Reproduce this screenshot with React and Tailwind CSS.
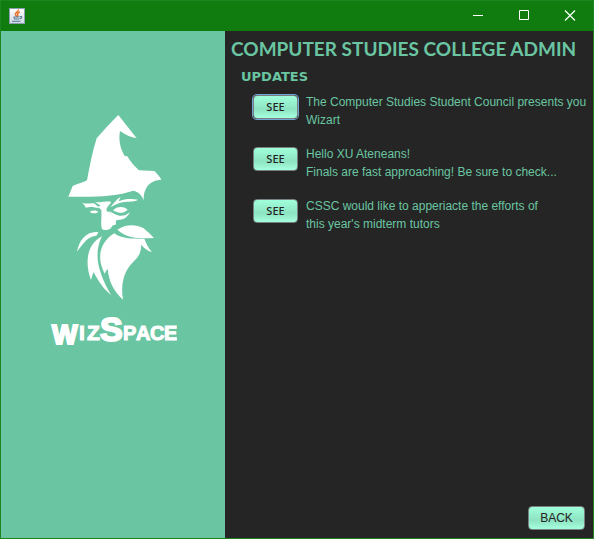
const updates = [
  { id: 1, lines: ["The Computer Studies Student Council presents you", "Wizart"], focused: true },
  { id: 2, lines: ["Hello XU Ateneans!", "Finals are fast approaching! Be sure to check..."] },
  { id: 3, lines: ["CSSC would like to apperiacte the efforts of", "this year's midterm tutors"] },
];

const buttonLook =
  "rounded border border-[#777f82] bg-linear-to-b from-[#a0ffdb] via-[#8de3c2] via-60% to-[#a5ffde] text-[#222]";

function JavaIcon() {
  return (
    <svg className="size-4" viewBox="0 0 16 16" aria-hidden="true">
      <defs>
        <linearGradient id="tile" x1="0" y1="0" x2="0" y2="1">
          <stop offset="0" stopColor="#fff" />
          <stop offset="1" stopColor="#cfd8e2" />
        </linearGradient>
      </defs>
      <rect x="0.5" y="0.5" width="15" height="15" fill="url(#tile)" stroke="#8c9fb0" />
      <path d="M9.5 1.5C10 3.5 6 4.500 6.300 6.300C6.500 7.500 7.800 7.500 7.800 9M11 4C8.800 4.800 8 5.500 8.700 6.700C9.200 7.600 8.800 8 8.300 8.700" fill="none" stroke="#e8762d" strokeWidth="1.500" />
      <path d="M4.500 9H10.500M5 11H10M10.800 8.700C13.500 7.700 13.500 10.500 10.500 11M3 13.300H11.500M5 9.500V10.500" fill="none" stroke="#4f7896" strokeWidth="1.100" />
    </svg>
  );
}

function TitleBar() {
  const control = "flex h-full w-[46px] items-center justify-center text-white";
  return (
    <header className="flex h-[30px] shrink-0 items-center justify-between bg-[#107c10] pl-2">
      <JavaIcon />
      <div className="flex h-full">
        <button type="button" aria-label="Minimize" className={control}>
          <svg className="size-3" viewBox="0 0 12 12" stroke="currentColor"><path d="M1 5.500H11" /></svg>
        </button>
        <button type="button" aria-label="Maximize" className={control}>
          <svg className="size-3" viewBox="0 0 12 12" fill="none" stroke="currentColor"><path d="M1.500 0.500H10.500V9.500H1.500Z" /></svg>
        </button>
        <button type="button" aria-label="Close" className={control}>
          <svg className="size-3" viewBox="0 0 12 12" stroke="currentColor" strokeWidth="1.200"><path d="M1 0.500L11 10.500M11 0.500L1 10.500" /></svg>
        </button>
      </div>
    </header>
  );
}

function Wizard() {
  return (
    <svg className="h-48 w-[100px]" viewBox="24 18 300 576" fill="#fff" role="img" aria-label="Wizard">
      <path d="M190 30L245 100C228 97 210 89 195 78C190 106 196 130 209 153L217 154C226 170 238 184 252 196L298 198C306 206 315 216 319 224C291 226 266 240 266 286C260 270 250 260 235 257C185 274 120 277 40 275L53 243C70 236 84 233 96 226C104 184 112 140 125 100C145 76 167 53 190 30Z" />
      <path d="M81 294C99 298 110 292 119 296C124 300 129 304 132 310C119 306 104 304 92 308C91 301 86 298 81 294Z" />
      <path d="M104 320C112 315 124 316 130 320C125 326 111 326 104 320Z" />
      <path d="M119 290C135 295 152 288 168 290C167 297 158 303 156 309C151 317 157 320 164 322C173 334 184 339 185 347C179 348 186 354 181 360C172 358 171 365 166 371C158 376 147 377 141 372C136 357 141 337 139 322C142 316 136 311 128 305L137 302Z" />
      <path d="M166 306C177 294 182 285 197 275C194 281 192 286 192 289C209 281 230 281 249 284C239 291 225 289 215 290C192 291 183 299 166 306Z" />
      <path d="M174 316C184 305 204 302 218 314C207 326 189 326 174 316Z" />
      <path d="M162 318C172 322 179 329 193 332C206 334 216 328 225 322C215 340 203 346 184 345C176 339 170 329 162 318Z" />
      <path d="M66 440C72 406 94 377 130 381C126 388 128 391 120 393C99 396 88 411 66 440Z" />
      <path d="M141 394C94 419 89 473 108 525C111 515 112 509 116 502C130 528 145 552 168 570C132 508 113 449 141 394Z" />
      <path d="M187 374C214 356 243 358 266 370C279 381 288 390 297 399C258 401 221 403 187 374Z" />
      <path d="M178 385C203 403 232 401 268 401C274 417 281 430 291 441C277 438 267 429 259 419C258 448 247 459 235 470C204 500 197 541 204 584C177 558 162 533 158 492C151 498 152 503 149 506C122 456 137 409 178 385Z" />
    </svg>
  );
}

function Wordmark() {
  return (
    <svg className="mt-1 h-11 w-32" viewBox="0 0 128 44" fill="#fff" stroke="#fff" fontFamily="'Liberation Sans', Arial, sans-serif" fontWeight="700">
      <text fontSize="27" strokeWidth="2" x="3" y="37">W</text>
      <text fontSize="21" strokeWidth="1" x="30 38" y="33">IZ</text>
      <text fontSize="34" strokeWidth="2" x="51" y="34">S</text>
      <text fontSize="20" strokeWidth="1" x="74 87 101 115" y="33">PACE</text>
    </svg>
  );
}

export default function App() {
  return (
    <div className="flex min-h-screen flex-col border border-[#1e8420] bg-[#252525] font-['Liberation_Sans',Arial,sans-serif] text-[#6ac5a2]">
      <TitleBar />
      <div className="flex grow">
        <aside className="flex w-56 shrink-0 flex-col items-center bg-[#6ac5a2] pt-20">
          <Wizard />
          <Wordmark />
        </aside>
        <main className="flex min-w-0 grow flex-col pt-1">
          <h1 className="pl-1.5 font-['Lato',sans-serif] text-[19px] leading-7 font-bold whitespace-nowrap">
            COMPUTER STUDIES COLLEGE ADMIN
          </h1>
          <h2 className="pl-4 font-['DejaVu_Sans',Verdana,sans-serif] text-[13px] leading-7 font-bold">UPDATES</h2>
          <ul className="flex flex-col gap-4 pt-0.5 pl-7">
            {updates.map((update) => (
              <li key={update.id} className="flex gap-2">
                <button
                  type="button"
                  className={`mt-0.5 h-6 w-[45px] shrink-0 text-[11px] font-['Noto_Sans',sans-serif] font-medium ${buttonLook} ${update.focused ? "ring-1 ring-[#73a4d1]" : ""}`}
                >
                  SEE
                </button>
                <p className="text-[12px] leading-[18px] whitespace-nowrap">
                  {update.lines[0]}
                  <br />
                  {update.lines[1]}
                </p>
              </li>
            ))}
          </ul>
          <button type="button" className={`mt-auto mr-2 mb-2 h-6 w-[57px] self-end text-[12px] ${buttonLook}`}>
            BACK
          </button>
        </main>
      </div>
    </div>
  );
}
